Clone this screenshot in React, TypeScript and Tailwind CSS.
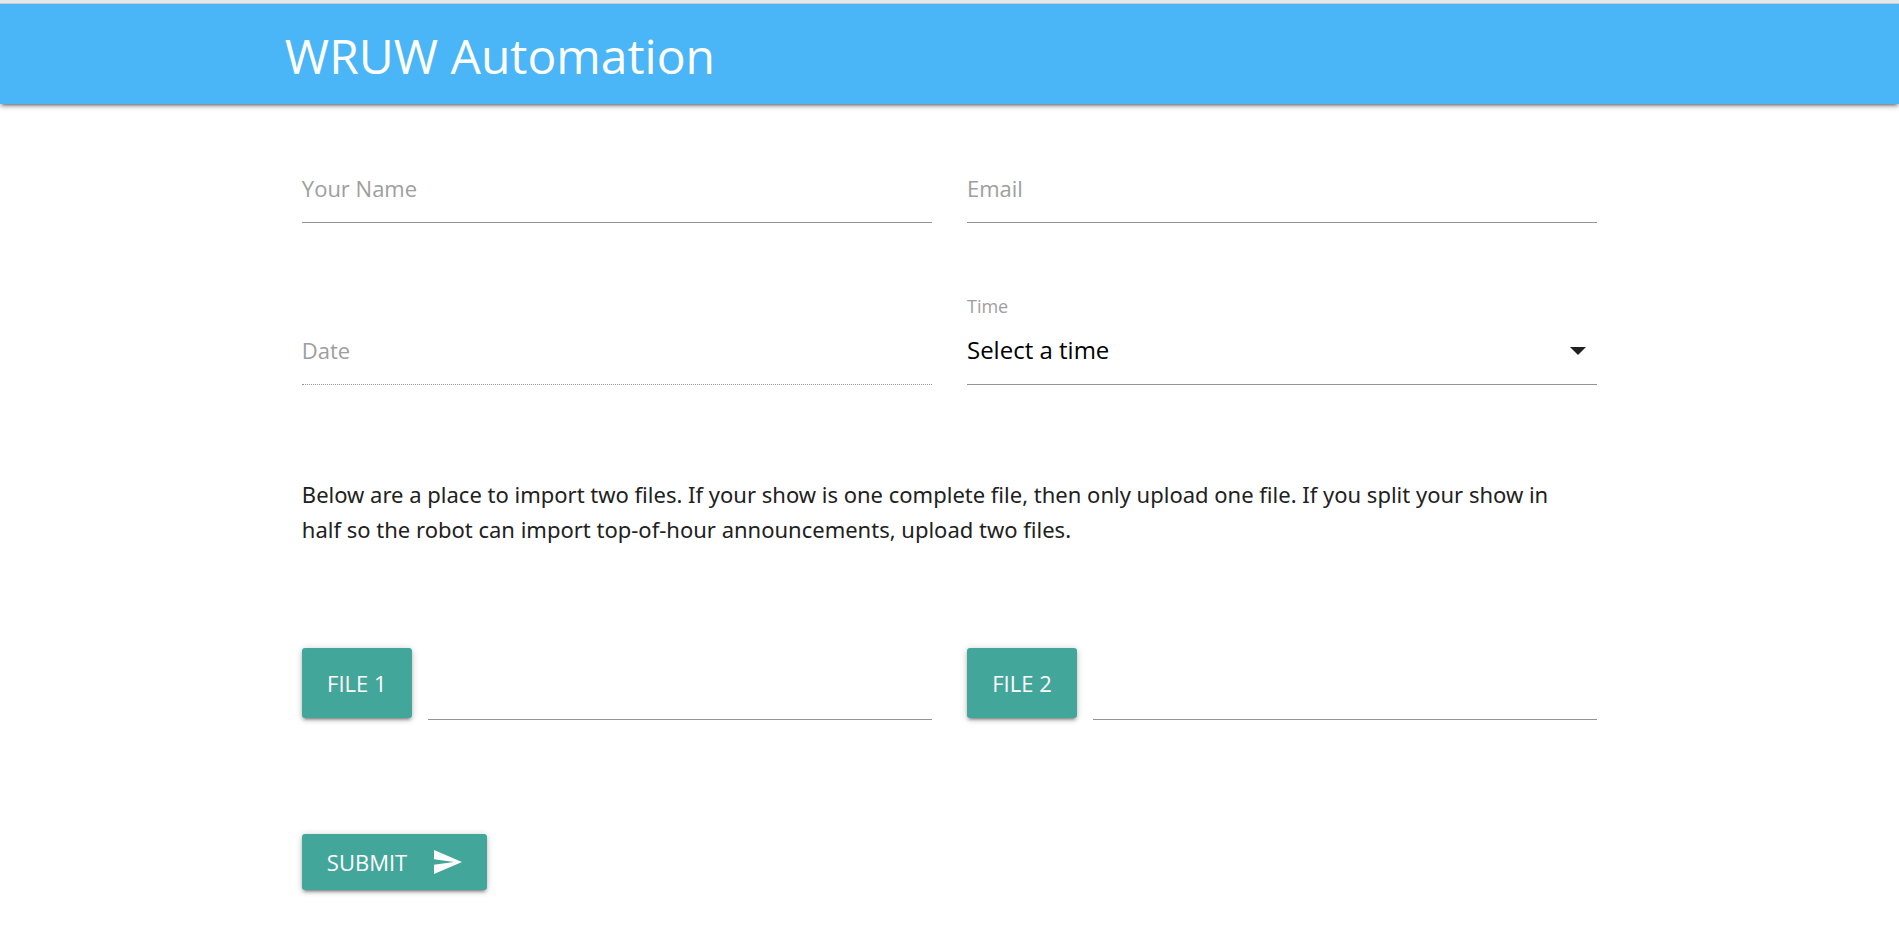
import { useRef, useState } from 'react';

const fieldLine = 'h-[68px] w-full rounded-none border-b border-[#949494] bg-transparent pb-0.5 text-[24px] text-black outline-none';
const raised =
  'rounded-[3px] bg-[#43a69a] text-[22px] text-white uppercase shadow-[0_3px_3px_0_rgba(0,0,0,0.14),0_4px_2px_-3px_rgba(0,0,0,0.3),0_1px_7px_0_rgba(0,0,0,0.22)] hover:bg-[#4db6ac]';

function TextField({ id, label, type = 'text', dotted = false }: { id: string; label: string; type?: string; dotted?: boolean }) {
  return (
    <div className="grid min-w-0 self-end">
      <input
        id={id}
        type={type}
        placeholder=" "
        readOnly={dotted}
        className={`peer col-start-1 row-start-1 ${fieldLine} ${dotted ? 'border-dotted' : ''}`}
      />
      <label
        htmlFor={id}
        className="col-start-1 row-start-1 cursor-text self-center justify-self-start pb-0.5 text-[22px] leading-8 text-[#9e9e9e] transition peer-focus:-translate-y-9 peer-[:not(:placeholder-shown)]:-translate-y-9"
      >
        {label}
      </label>
    </div>
  );
}

const times = ['Select a time', '12:00 AM', '6:00 AM', '12:00 PM', '6:00 PM'];

function TimeField() {
  return (
    <div className="min-w-0">
      <label htmlFor="time" className="block pt-0.5 text-lg leading-[22px] text-[#9e9e9e]">
        Time
      </label>
      <div className="grid items-center">
        <select id="time" className={`col-start-1 row-start-1 cursor-pointer appearance-none ${fieldLine}`}>
          {times.map((t) => (
            <option key={t}>{t}</option>
          ))}
        </select>
        <svg
          viewBox="0 0 16 8"
          className="pointer-events-none col-start-1 row-start-1 mr-[11px] h-2 w-4 justify-self-end fill-[#212121]"
          aria-hidden="true"
        >
          <path d="M0 0h16L8 8z" />
        </svg>
      </div>
    </div>
  );
}

function FileField({ label }: { label: string }) {
  const picker = useRef<HTMLInputElement>(null);
  const [name, setName] = useState('');
  return (
    <div className="flex min-w-0 gap-4">
      <button
        type="button"
        onClick={() => picker.current?.click()}
        className={`h-[70px] min-w-[110px] shrink-0 px-[25px] ${raised}`}
      >
        {label}
      </button>
      <input
        ref={picker}
        type="file"
        aria-label={label}
        className="hidden"
        onChange={(e) => setName(e.target.files?.[0]?.name ?? '')}
      />
      <input
        type="text"
        readOnly
        value={name}
        aria-label={`${label} name`}
        className="h-[72px] min-w-0 flex-1 border-b border-[#949494] bg-transparent text-[22px] outline-none"
      />
    </div>
  );
}

export default function App() {
  return (
    <div className="min-h-screen bg-white font-['Open_Sans','Noto_Sans',sans-serif] text-[#212121]">
      <div className="relative z-10 h-1 border-b border-[#c8cccd] bg-[#e4e8e9]" />
      <header className="bg-[#4ab6f7] shadow-[0_3px_3px_0_rgba(0,0,0,0.14),0_4px_2px_-3px_rgba(0,0,0,0.3),0_1px_7px_0_rgba(0,0,0,0.3)]">
        <div className="mx-auto flex h-[100px] w-[70%] items-center pt-1">
          <a href="#" className="text-5xl text-white">
            WRUW Automation
          </a>
        </div>
      </header>
      <form className="mx-auto w-[70%] px-[17px] pt-[51px] pb-11" onSubmit={(e) => e.preventDefault()}>
        <div className="grid grid-cols-2 gap-x-[35px]">
          <TextField id="name" label="Your Name" />
          <TextField id="email" label="Email" type="email" />
        </div>
        <div className="mt-[70px] grid grid-cols-2 gap-x-[35px]">
          <TextField id="date" label="Date" dotted />
          <TimeField />
        </div>
        <p className="mt-[92px] pr-4 font-['Noto_Sans',sans-serif] text-[22px] leading-[35px]">
          Below are a place to import two files. If your show is one complete file, then only upload one file. If you split
          your show in half so the robot can import top-of-hour announcements, upload two files.
        </p>
        <div className="mt-[101px] grid grid-cols-2 gap-x-[35px]">
          <FileField label="File 1" />
          <FileField label="File 2" />
        </div>
        <button type="submit" className={`mt-[114px] flex h-14 items-center gap-[27px] px-[25px] ${raised}`}>
          Submit
          <svg viewBox="2 3 21 18" className="h-6 w-7 fill-white" aria-hidden="true">
            <path d="M2.01 21L23 12 2.01 3 2 10l15 2-15 2z" />
          </svg>
        </button>
      </form>
    </div>
  );
}
